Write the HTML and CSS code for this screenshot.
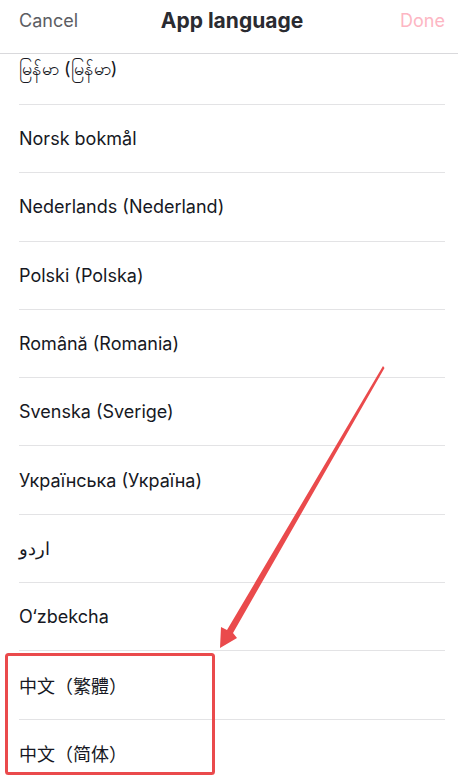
FILE: index.html
```html
<!DOCTYPE html>
<html>
<head>
<meta charset="utf-8">
<link rel="stylesheet" href="styles.css">
</head>
<body>
<div class="screen">
  <header class="topbar">
    <span class="cancel">Cancel</span>
    <span class="title">App language</span>
    <span class="done">Done</span>
  </header>
  <main class="viewport">
    <ul class="list">
      <li class="row">မြန်မာ (မြန်မာ)</li>
      <li class="row">Norsk bokmål</li>
      <li class="row">Nederlands (Nederland)</li>
      <li class="row">Polski (Polska)</li>
      <li class="row">Română (Romania)</li>
      <li class="row">Svenska (Sverige)</li>
      <li class="row">Українська (Україна)</li>
      <li class="row">اردو</li>
      <li class="row">O‘zbekcha</li>
      <li class="row cjk">中文（繁體）</li>
      <li class="row cjk">中文（简体）</li>
    </ul>
  </main>
  <svg class="annot" width="458" height="781" viewBox="0 0 458 781">
    <path d="M383 366 L384.5 368 L233 633 L237 638 L220 648 L221 627 L227 630 Z" fill="#ea4a4c"/>
    <rect x="6.5" y="654.5" width="207" height="119" rx="2" fill="none" stroke="#ea4a4c" stroke-width="3"/>
  </svg>
</div>
</body>
</html>
```
FILE: styles.css
```css
html, body {
  margin: 0;
  padding: 0;
  background: #fff;
}
.screen {
  position: relative;
  width: 458px;
  height: 781px;
  overflow: hidden;
  font-family: "Inter", "Noto Sans", "Noto Sans CJK SC", sans-serif;
  color: #161823;
}
.topbar {
  height: 54px;
  box-sizing: border-box;
  border-bottom: 1px solid #d9d9dc;
  display: flex;
  align-items: center;
  justify-content: space-between;
  padding: 0 13px 12px 19px;
  position: relative;
  z-index: 2;
  background: #fff;
}
.cancel {
  font-size: 18px;
  color: #5c5d63;
  width: 80px;
}
.title {
  font-size: 21px;
  font-weight: 700;
  color: #2a2b31;
}
.done {
  font-size: 18px;
  color: #fdb6c3;
  width: 80px;
  text-align: right;
}
.viewport {
  height: 727px;
  overflow: hidden;
}
.list {
  list-style: none;
  margin: -17.3px 0 0 0;
  padding: 0 13px 0 19px;
}
.row {
  height: 67.3px;
  border-bottom: 1px solid #e3e3e5;
  display: flex;
  align-items: center;
  font-size: 18px;
}
.cjk {
  font-family: "Noto Sans CJK TC", "Noto Sans CJK SC", sans-serif;
  font-size: 18px;
}
.annot {
  position: absolute;
  left: 0;
  top: 0;
  pointer-events: none;
  z-index: 3;
}
```
